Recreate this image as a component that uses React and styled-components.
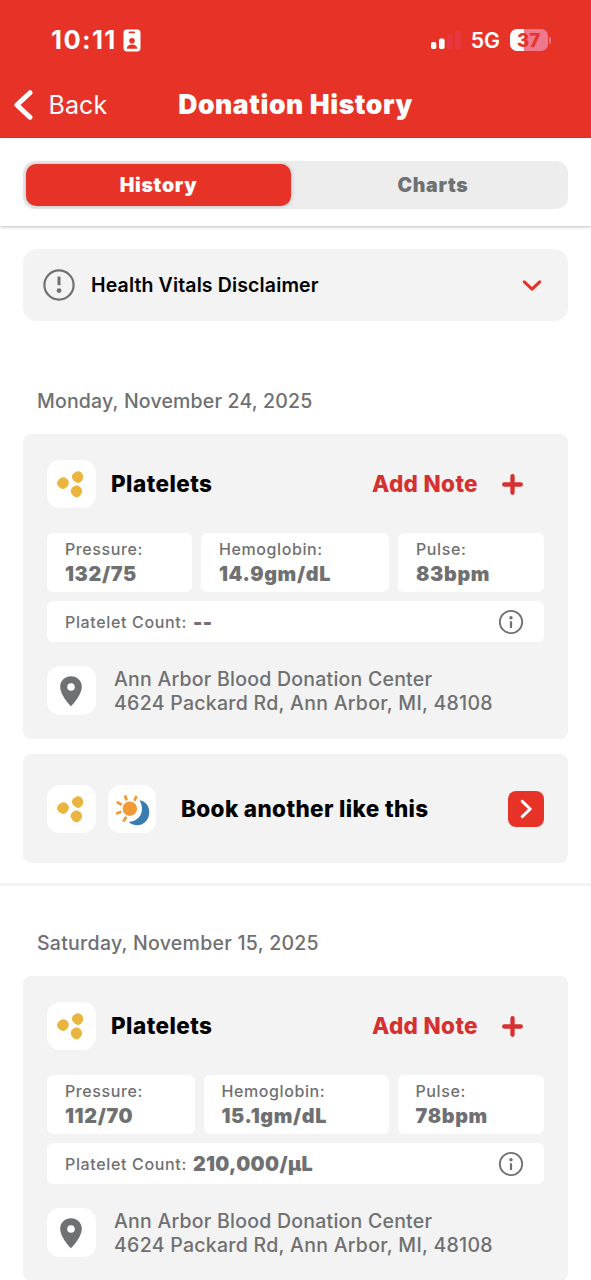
import React from "react";
import styled, { createGlobalStyle } from "styled-components";

const RED = "#e73327";
const GREY = "#6f7072";

const Global = createGlobalStyle`
  * { box-sizing: border-box; }
  html, body { margin: 0; padding: 0; background: #fff; }
  body { font-family: Inter, "Liberation Sans", sans-serif; overflow: hidden; }
`;

const Screen = styled.div`
  width: 591px;
  height: 1280px;
  overflow: hidden;
  display: flex;
  flex-direction: column;
  background: #fff;
`;

const Label = styled.span`
  display: block;
  white-space: nowrap;
  font-size: ${(p) => p.$size}px;
  font-weight: ${(p) => p.$weight || 500};
  letter-spacing: ${(p) => p.$track || 0}px;
  line-height: ${(p) => p.$line || 24}px;
  color: ${(p) => p.$color || GREY};
`;

const Header = styled.header`
  flex: none;
  height: 138px;
  background: ${RED};
`;

const StatusBar = styled.div`
  height: 80px;
  padding: 0 40px 0 51px;
  display: flex;
  align-items: center;
  justify-content: space-between;
`;

const Cluster = styled.div`
  display: flex;
  align-items: center;
  gap: ${(p) => p.$gap}px;
`;

const NavBar = styled.div`
  height: 49px;
  padding: 0 14px;
  display: grid;
  grid-template-columns: 1fr auto 1fr;
  align-items: center;
`;

const NavTitle = styled.div`
  padding-bottom: 2px;
`;

const TabPanel = styled.div`
  flex: none;
  height: 88px;
  padding: 23px 23px 0;
  background: #fff;
  box-shadow: 0 1px 3px rgba(0, 0, 0, 0.25);
`;

const Segments = styled.div`
  height: 48px;
  padding: 3px;
  border-radius: 12px;
  background: #ededed;
  display: flex;
  gap: 10px;
`;

const Segment = styled.button`
  flex: ${(p) => (p.$active ? "0 0 265px" : "1")};
  border: 0;
  padding: 0;
  font-family: inherit;
  display: flex;
  align-items: center;
  justify-content: center;
  border-radius: 10px;
  background: ${(p) => (p.$active ? RED : "transparent")};
  box-shadow: ${(p) => (p.$active ? "0 0 5px rgba(0, 0, 0, 0.22)" : "none")};
`;

const Disclaimer = styled.div`
  flex: none;
  margin: 23px 23px 0;
  height: 72px;
  padding: 0 26px 0 20px;
  border-radius: 14px;
  background: #f3f3f3;
  display: flex;
  align-items: center;
  gap: 16px;
`;

const Grow = styled.div`
  flex: 1;
`;

const Entry = styled.section`
  flex: none;
  padding: 0 23px;
`;

const DateHeading = styled.div`
  height: ${(p) => p.$height}px;
  padding: 0 14px 21px;
  display: flex;
  align-items: flex-end;
`;

const Card = styled.div`
  height: 305px;
  padding: 26px 24px 0;
  border-radius: 8px;
  background: #f3f3f3;
`;

const CardHead = styled.div`
  height: 48px;
  padding-right: 21px;
  display: flex;
  align-items: center;
`;

const Tile = styled.div`
  flex: none;
  width: 48.5px;
  height: 48.5px;
  border-radius: 13px;
  background: #fff;
  display: flex;
  align-items: center;
  justify-content: center;
`;

const Stats = styled.div`
  margin-top: 25px;
  display: grid;
  grid-template-columns: ${(p) => p.$columns};
  gap: 9px;
`;

const Stat = styled.div`
  height: 59px;
  padding: 4px 0 0 18px;
  border-radius: 6px;
  background: #fff;
`;

const CountRow = styled.div`
  margin-top: 9px;
  height: 41px;
  padding: 0 20px 0 18px;
  border-radius: 6px;
  background: #fff;
  display: flex;
  align-items: center;
  gap: 6px;
`;

const Location = styled.div`
  margin-top: 24px;
  display: flex;
  align-items: center;
  gap: 18.5px;
`;

const Address = styled.div`
  padding-top: 2px;
`;

const BookCard = styled.div`
  margin-top: 15px;
  height: 109px;
  padding: 1px 24px 0;
  border-radius: 8px;
  background: #f3f3f3;
  display: flex;
  align-items: center;
`;

const Go = styled.div`
  width: 36.5px;
  height: 36.5px;
  border-radius: 8px;
  background: ${RED};
  display: flex;
  align-items: center;
  justify-content: center;
`;

const Divider = styled.div`
  flex: none;
  margin-top: 20px;
  height: 3px;
  background: #f3f3f3;
`;

const BookTitle = styled.div`
  margin-left: 25px;
  flex: 1;
`;

const SecondTile = styled.div`
  margin-left: 12px;
`;

const BadgeIcon = () => (
  <svg width="18" height="23" viewBox="0 0 18 23">
    <rect x="0.5" y="0.5" width="17" height="22" rx="3.4" fill="#fff" />
    <rect x="5.5" y="2.6" width="6.6" height="1.6" rx="0.8" fill={RED} />
    <circle cx="9" cy="11.8" r="2.8" fill={RED} />
    <path d="M3.8 19.8c0-2.4 1.9-4.2 5.2-4.2s5.2 1.8 5.2 4.2z" fill={RED} />
  </svg>
);

const SignalIcon = () => (
  <svg width="30" height="20" viewBox="0 0 30 20">
    <rect x="0" y="12" width="5.3" height="7" rx="1.8" fill="#fff" />
    <rect x="8" y="8.5" width="5.6" height="10.5" rx="1.8" fill="#fff" />
    <rect x="16" y="4.5" width="5.4" height="14.5" rx="1.8" fill="#e93645" />
    <rect x="24.3" y="0.5" width="5.4" height="18.5" rx="1.8" fill="#e93645" />
  </svg>
);

const Battery = styled.div`
  width: 41.5px;
  height: 22px;
  display: flex;
  align-items: center;
`;

const BatteryBody = styled.div`
  width: 38px;
  height: 21.5px;
  border-radius: 7px;
  background: linear-gradient(90deg, #fff 0 14.5px, #f0788c 14.5px);
  display: flex;
  align-items: center;
  justify-content: center;
`;

const BatteryCap = styled.div`
  margin-left: 1.5px;
  width: 2px;
  height: 7px;
  border-radius: 0 3px 3px 0;
  background: #f0788c;
`;

const BackIcon = () => (
  <svg width="19" height="30" viewBox="0 0 19 30">
    <path d="M16 2.7L2.9 15L16 27.3" fill="none" stroke="#fff" strokeWidth="5" strokeLinecap="round" strokeLinejoin="round" />
  </svg>
);

const AlertIcon = () => (
  <svg width="32" height="32" viewBox="0 0 32 32">
    <circle cx="16" cy="16" r="14.6" fill="none" stroke={GREY} strokeWidth="2.2" />
    <path d="M16 7.6V16.2" stroke={GREY} strokeWidth="3" />
    <circle cx="16" cy="21.6" r="2.4" fill={GREY} />
  </svg>
);

const ChevronDown = () => (
  <svg width="20" height="12" viewBox="0 0 20 12">
    <path d="M2.3 2.8L10 10.2L17.7 2.8" fill="none" stroke={RED} strokeWidth="3" strokeLinecap="round" strokeLinejoin="round" />
  </svg>
);

const PlateletsIcon = () => (
  <svg width="48" height="48" viewBox="0 0 48 48" fill="#eab53f">
    <path d="M10 23.2C10 20.9 13.6 17.3 16.4 17.3C18.9 17.3 21.9 20 21.9 22.6C21.9 25.3 18.9 28.9 16.4 28.9C13.6 28.9 10 25.8 10 23.2Z" />
    <path d="M24.9 16.6C24.9 13.8 28.6 11.2 31.4 11.2C34 11.2 36.2 14 36.2 17C36.2 19.8 33.6 22.9 31.2 22.9C28.2 22.9 24.9 19.6 24.9 16.6Z" />
    <path d="M23.7 31C23.7 28.3 26.8 25.6 29.5 25.6C32.2 25.6 35.1 28.3 35.1 31C35.1 33.8 32.1 37.4 29.7 37.4C27.2 37.4 23.7 33.9 23.7 31Z" />
  </svg>
);

const DayNightIcon = () => (
  <svg width="48" height="48" viewBox="0 0 48 48">
    <path d="M31.4 15.2C37.2 16 41.3 20.8 41.3 26.9C41.3 34.2 36 40.2 29 40.2C25.7 40.2 22.5 38.9 20.6 36.7C27.9 37 34 31.3 34 24C34 20.8 33 17.6 31.4 15.2Z" fill="#397db0" />
    <circle cx="21.8" cy="23.7" r="7.2" fill="#f09a37" />
    <g stroke="#f09a37" strokeWidth="2.8">
      <path d="M17 10.4L18.6 15.4" />
      <path d="M28.5 11L26.4 15.8" />
      <path d="M8.7 17L13.7 19.8" />
      <path d="M8.2 28.6L13.4 26.8" />
      <path d="M15.4 36.6L18.2 31.8" />
    </g>
  </svg>
);

const PlusIcon = () => (
  <svg width="21" height="21" viewBox="0 0 21 21">
    <path d="M10.5 2.2V18.8M2.2 10.5H18.8" stroke="#d63031" strokeWidth="4.3" strokeLinecap="round" />
  </svg>
);

const InfoIcon = () => (
  <svg width="26" height="26" viewBox="0 0 26 26">
    <circle cx="13" cy="13" r="11.2" fill="none" stroke={GREY} strokeWidth="1.8" />
    <circle cx="13" cy="8.8" r="1.7" fill={GREY} />
    <path d="M13 12.2V19" stroke={GREY} strokeWidth="2.2" />
  </svg>
);

const PinIcon = () => (
  <svg width="48" height="48" viewBox="0 0 48 48">
    <path fillRule="evenodd" d="M24 39.4C24 39.4 13.2 28.6 13.2 19.8C13.2 13.6 18 9.2 24 9.2C30 9.2 34.8 13.6 34.8 19.8C34.8 28.6 24 39.4 24 39.4ZM24 16.2A3.8 3.8 0 1 0 24 23.8A3.8 3.8 0 1 0 24 16.2Z" fill={GREY} />
  </svg>
);

const ChevronRight = () => (
  <svg width="12" height="20" viewBox="0 0 12 20">
    <path d="M2.3 2.4L10.2 10L2.3 17.6" fill="none" stroke="#fff" strokeWidth="3" strokeLinecap="round" strokeLinejoin="round" />
  </svg>
);

const TitleSlot = styled.div`
  flex: 1;
  padding-left: 15.5px;
`;

const PlusSlot = styled.div`
  margin-left: 24px;
  display: flex;
`;

function Donation({ pressure, hemoglobin, pulse, count, columns }) {
  return (
    <Card>
      <CardHead>
        <Tile><PlateletsIcon /></Tile>
        <TitleSlot><Label $size={22.5} $weight={800} $track={0.45} $line={26} $color="#000">Platelets</Label></TitleSlot>
        <Label $size={22.5} $weight={800} $track={0.35} $line={26} $color="#d63031">Add Note</Label>
        <PlusSlot><PlusIcon /></PlusSlot>
      </CardHead>
      <Stats $columns={columns}>
        {[["Pressure:", pressure], ["Hemoglobin:", hemoglobin], ["Pulse:", pulse]].map(([name, value]) => (
          <Stat key={name}>
            <Label $size={16} $track={0.6}>{name}</Label>
            <Label $size={19.8} $weight={900} $track={0.65} $line={27}>{value}</Label>
          </Stat>
        ))}
      </Stats>
      <CountRow>
        <Label $size={16} $track={0.65}>Platelet Count:</Label>
        <Label $size={19.8} $weight={900} $track={0.35}>{count}</Label>
        <Grow />
        <InfoIcon />
      </CountRow>
      <Location>
        <Tile><PinIcon /></Tile>
        <Address>
          <Label $size={19.5} $line={23.5} $track={0.23}>Ann Arbor Blood Donation Center</Label>
          <Label $size={19.5} $line={23.5} $track={0.28}>4624 Packard Rd, Ann Arbor, MI, 48108</Label>
        </Address>
      </Location>
    </Card>
  );
}

export default function App() {
  return (
    <Screen>
      <Global />
      <Header>
        <StatusBar>
          <Cluster $gap={6.5}>
            <Label $size={25.5} $weight={700} $track={1.4} $color="#fff">10:11</Label>
            <BadgeIcon />
          </Cluster>
          <Cluster $gap={9.5}>
            <SignalIcon />
            <Label $size={21.3} $weight={600} $color="#fff">5G</Label>
            <Battery>
              <BatteryBody><Label $size={18.5} $weight={800} $color={RED}>37</Label></BatteryBody>
              <BatteryCap />
            </Battery>
          </Cluster>
        </StatusBar>
        <NavBar>
          <Cluster $gap={15.5}>
            <BackIcon />
            <Label $size={25} $weight={400} $track={0.1} $color="#fff">Back</Label>
          </Cluster>
          <NavTitle><Label $size={26.5} $weight={900} $track={0.6} $color="#fff">Donation History</Label></NavTitle>
          <span />
        </NavBar>
      </Header>
      <TabPanel>
        <Segments>
          <Segment $active><Label $size={19.5} $weight={900} $track={0.7} $color="#fff">History</Label></Segment>
          <Segment><Label $size={19.5} $weight={900} $track={0.65}>Charts</Label></Segment>
        </Segments>
      </TabPanel>
      <Disclaimer>
        <AlertIcon />
        <Label $size={19.5} $weight={600} $track={0.14} $color="#000">Health Vitals Disclaimer</Label>
        <Grow />
        <ChevronDown />
      </Disclaimer>
      <Entry>
        <DateHeading $height={113}><Label $size={19.5} $track={0.18}>Monday, November 24, 2025</Label></DateHeading>
        <Donation pressure="132/75" hemoglobin="14.9gm/dL" pulse="83bpm" count="--" columns="145px 188px 1fr" />
        <BookCard>
          <Tile><PlateletsIcon /></Tile>
          <SecondTile><Tile><DayNightIcon /></Tile></SecondTile>
          <BookTitle><Label $size={22.5} $weight={800} $track={0.36} $color="#000">Book another like this</Label></BookTitle>
          <Go><ChevronRight /></Go>
        </BookCard>
      </Entry>
      <Divider />
      <Entry>
        <DateHeading $height={90}><Label $size={19.5} $track={0.27}>Saturday, November 15, 2025</Label></DateHeading>
        <Donation pressure="112/70" hemoglobin="15.1gm/dL" pulse="78bpm" count="210,000/µL" columns="147.5px 185px 1fr" />
      </Entry>
    </Screen>
  );
}
